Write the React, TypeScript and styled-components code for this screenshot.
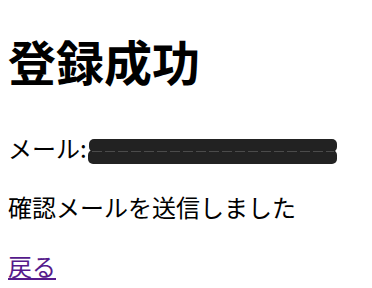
import styled, { createGlobalStyle } from 'styled-components';

const GlobalStyle = createGlobalStyle`
  body {
    margin: 8px;
    font-family: "Noto Sans CJK JP", "Noto Sans", sans-serif;
    font-size: 24px;
    color: #000;
    background: #fff;
  }
`;

const Page = styled.main`
  display: block;
`;

const Title = styled.h1`
  font-size: 48px;
  font-weight: 700;
  margin: 17px 0 35px;
`;

const Text = styled.p`
  margin: 24px 0;
`;

const Redacted = styled.svg`
  display: inline-block;
  vertical-align: middle;
  margin-left: 1px;
`;

const BackLink = styled.a`
  color: #551a8b;
  text-decoration: underline;
  cursor: pointer;
`;

const Scribble = () => (
  <Redacted width="250" height="27" viewBox="0 0 250 27">
    <rect x="1" y="1" width="248" height="13" rx="5" fill="#222" />
    <rect x="0" y="12" width="249" height="14" rx="5" fill="#222" />
    <line
      x1="4"
      y1="13.5"
      x2="246"
      y2="13.5"
      stroke="#555"
      strokeWidth="0.8"
      strokeDasharray="10 3"
    />
  </Redacted>
);

export default function App() {
  return (
    <>
      <GlobalStyle />
      <Page>
        <Title>登録成功</Title>
        <Text>
          メール:<Scribble />
        </Text>
        <Text>確認メールを送信しました</Text>
        <Text>
          <BackLink href="#">戻る</BackLink>
        </Text>
      </Page>
    </>
  );
}
